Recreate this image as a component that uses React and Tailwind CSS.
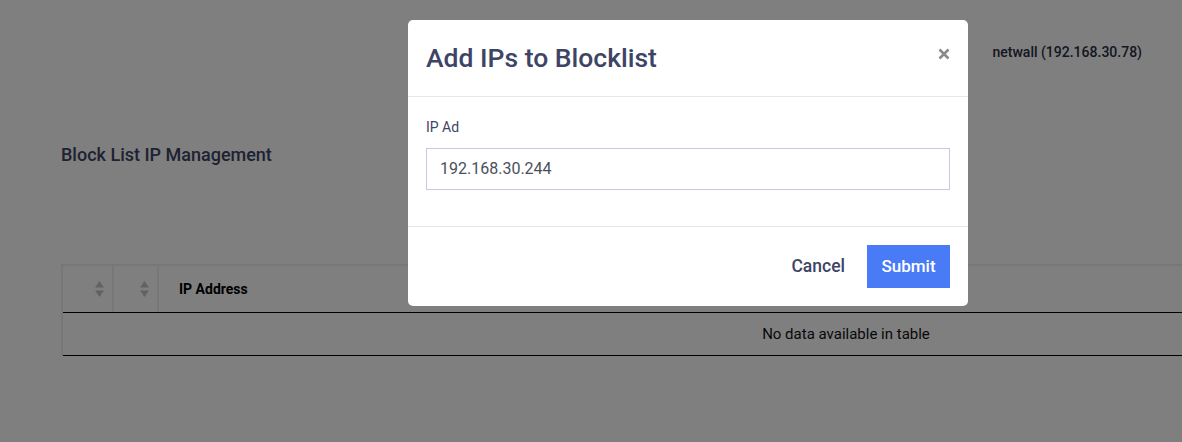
import React from "react";

function SortIcon() {
  return (
    <svg width="9" height="16" viewBox="0 0 9 16" className="block">
      <path d="M4.5 0 L9 6.5 L0 6.5 Z" fill="#c4c4c4" />
      <path d="M4.5 16 L9 9.5 L0 9.5 Z" fill="#c4c4c4" />
    </svg>
  );
}

export default function App() {
  return (
    <div
      className="relative w-[1182px] h-[442px] overflow-hidden bg-white"
      style={{ fontFamily: "Roboto, 'Liberation Sans', sans-serif" }}
    >
      {/* Page content */}
      <div className="flex flex-col">
        <div className="flex justify-end pt-[42px] pr-[40px] h-[80px]">
          <span className="text-[14px] font-medium text-[#2a2e44]">netwall (192.168.30.78)</span>
        </div>
        <div className="pl-[61px] pt-[63px]">
          <h2 className="text-[18px] font-medium text-[#3d4465] leading-[24px]">Block List IP Management</h2>
        </div>
        <div className="pl-[61px] pt-[97px]">
          <div className="w-[1570px] border-2 border-[#eeeeee] border-b-0">
            <div className="flex h-[47px] border-b border-black">
              <div className="w-[51px] flex items-center justify-end pr-[8px] border-r-2 border-[#eeeeee]">
                <SortIcon />
              </div>
              <div className="w-[45px] flex items-center justify-end pr-[8px] border-r-2 border-[#eeeeee]">
                <SortIcon />
              </div>
              <div className="flex-1 flex items-center pl-[20px]">
                <span className="text-[14px] font-bold text-black">IP Address</span>
              </div>
            </div>
            <div className="h-[43px] flex items-center justify-center border-b border-black">
              <span className="text-[15px] text-[#111]">No data available in table</span>
            </div>
          </div>
        </div>
      </div>

      {/* Overlay */}
      <div className="absolute inset-0 bg-black/50" />

      {/* Modal */}
      <div className="absolute left-[408px] top-[20px] w-[560px] bg-white rounded-[5px] flex flex-col">
        <div className="h-[77px] flex items-center justify-between pl-[18px] pr-[18px] border-b border-[#e4e6ef]">
          <h3 className="text-[26.5px] text-[#3d4465] font-medium">Add IPs to Blocklist</h3>
          <svg width="12" height="12" viewBox="0 0 12 12" className="mb-[8px]">
            <path d="M1.5 1.5 L10.5 10.5 M10.5 1.5 L1.5 10.5" stroke="#8a8a8a" strokeWidth="2.6" strokeLinecap="butt" />
          </svg>
        </div>
        <div className="px-[18px] pt-[21px] pb-[36px] flex flex-col border-b border-[#e4e6ef]">
          <label className="text-[14px] text-[#3d4465] leading-[18px]">IP Ad</label>
          <div className="mt-[12px] h-[42px] border border-[#c4cbe0] flex items-center px-[13px]">
            <span className="text-[16px] text-[#4b4f5c]">192.168.30.244</span>
          </div>
        </div>
        <div className="flex items-center justify-end gap-[22px] px-[18px] pt-[18px] pb-[18px]">
          <button className="text-[17.5px] text-[#3d4465] font-medium">Cancel</button>
          <button className="h-[43px] w-[83px] bg-[#4a7bf7] text-white text-[17px] font-medium">Submit</button>
        </div>
      </div>
    </div>
  );
}
